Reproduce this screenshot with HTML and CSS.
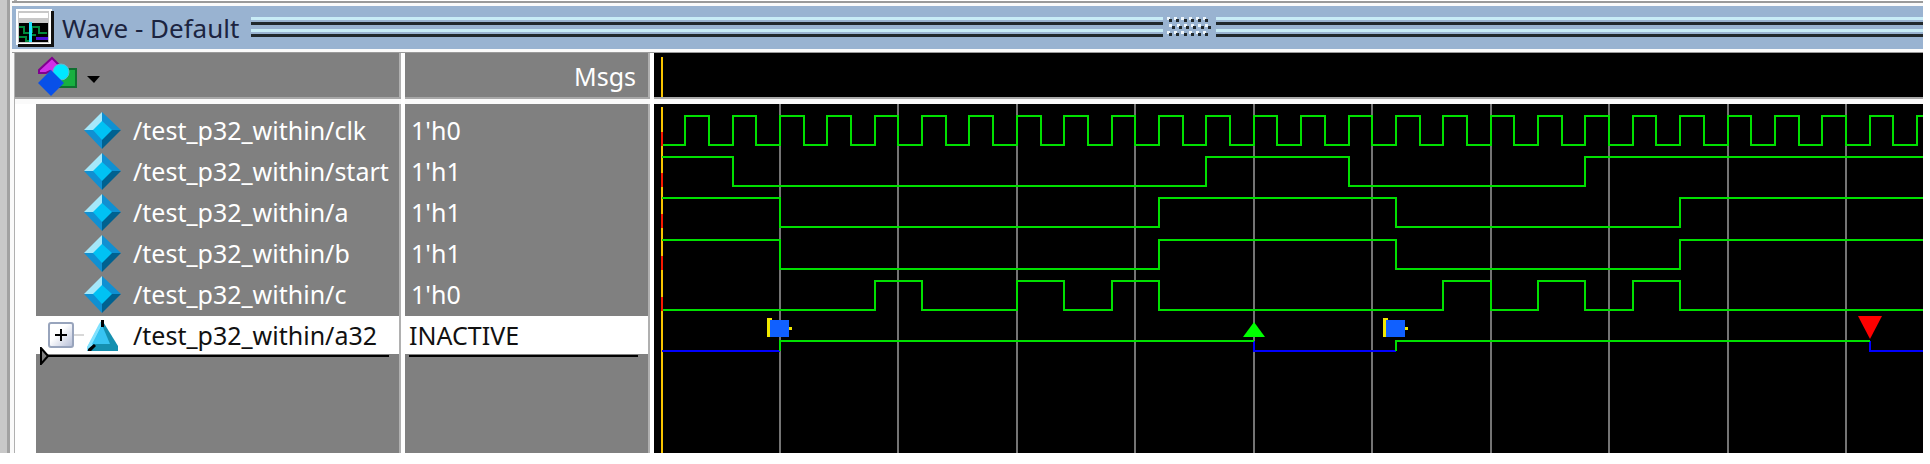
FILE: index.html
```html
<!DOCTYPE html>
<html lang="en">
<head>
<meta charset="utf-8">
<title>Wave - Default</title>
<link rel="stylesheet" href="styles.css">
</head>
<body>
<svg class="defs" width="0" height="0" aria-hidden="true">
  <symbol id="diamond" viewBox="0 0 37 37">
    <path fill="#a5e8fa" d="M18 0V18H0z"/>
    <path fill="#1090d2" d="M18 0L37 18H18zM0 18H18V37z"/>
    <path fill="#006190" d="M37 18H18V37z"/>
    <path fill="#00c2f4" d="M18 9L28 18L18 28L9 18z"/>
  </symbol>
</svg>
<main class="window">
  <header class="titlebar">
    <svg class="app-icon" width="38" height="38" viewBox="0 0 38 38" aria-hidden="true">
      <path fill="#fff" d="M0 0H36V36H0z"/>
      <path fill="#111" d="M35 2H38V38H2V35H35z"/>
      <path fill="#c8c8c8" d="M2 2H33V34H2z"/>
      <path fill="#fff" d="M3 4H32V9H3z"/>
      <path fill="#000" d="M3 14H32V33H3z"/>
      <path fill="none" stroke="#008a3c" stroke-width="2" d="M3 18H8V24H13M16 24V18H23V24H31M3 28H10V32H13M16 26H20"/>
      <path fill="#20e0ff" d="M13 13H16V33H13z"/>
      <path fill="#4a10d8" d="M20 28H32V31H20z"/>
    </svg>
    <h1 class="title">Wave - Default</h1>
    <span class="stripes stripes-left"></span>
    <svg class="grip" width="45" height="21" viewBox="0 0 45 21" aria-hidden="true">
      <g fill="#edf5fb">
        <path d="M0 0h3v3h-3zM7 0h3v3h-3zM14 0h3v3h-3zM22 0h3v3h-3zM29 0h3v3h-3zM36 0h3v3h-3z"/>
        <path d="M2 7h3v3h-3zM10 7h3v3h-3zM17 7h3v3h-3zM24 7h3v3h-3zM31 7h3v3h-3zM38 7h3v3h-3z"/>
        <path d="M0 14h3v3h-3zM7 14h3v3h-3zM14 14h3v3h-3zM22 14h3v3h-3zM29 14h3v3h-3zM36 14h3v3h-3z"/>
      </g>
      <g fill="#20282c">
        <path d="M2 2h3v3h-3zM9 2h3v3h-3zM17 2h3v3h-3zM24 2h3v3h-3zM31 2h3v3h-3zM38 2h3v3h-3z"/>
        <path d="M5 9h3v3h-3zM12 9h3v3h-3zM19 9h3v3h-3zM26 9h3v3h-3zM34 9h3v3h-3zM41 9h3v3h-3z"/>
        <path d="M2 16h3v3h-3zM9 16h3v3h-3zM17 16h3v3h-3zM24 16h3v3h-3zM31 16h3v3h-3zM38 16h3v3h-3z"/>
      </g>
    </svg>
    <span class="stripes stripes-right"></span>
  </header>

  <div class="panes">
    <section class="pane names" aria-label="Signals">
      <div class="pane-head">
        <button class="tool" type="button" aria-label="Signal filter">
          <svg width="62" height="41" viewBox="0 0 62 41" aria-hidden="true">
            <path fill="#18b040" stroke="#107030" stroke-width="2" d="M20 13H38V31H20z"/>
            <path fill="#d030e8" stroke="#800090" stroke-width="2" d="M1 14L14 2L24 12L16 20L12 15L8 17H1z"/>
            <circle fill="#00e8ff" stroke="#60b8d0" stroke-width="1" cx="23" cy="16" r="8"/>
            <path fill="#0850e8" d="M13 14L26 27L13 40L0 27z"/>
            <path fill="#000" d="M49 20H62L56 27z"/>
          </svg>
        </button>
      </div>
      <ul class="pane-body list tree">
        <li class="row"><svg class="icon" width="37" height="37"><use href="#diamond"/></svg><span>/test_p32_within/clk</span></li>
        <li class="row"><svg class="icon" width="37" height="37"><use href="#diamond"/></svg><span>/test_p32_within/start</span></li>
        <li class="row"><svg class="icon" width="37" height="37"><use href="#diamond"/></svg><span>/test_p32_within/a</span></li>
        <li class="row"><svg class="icon" width="37" height="37"><use href="#diamond"/></svg><span>/test_p32_within/b</span></li>
        <li class="row"><svg class="icon" width="37" height="37"><use href="#diamond"/></svg><span>/test_p32_within/c</span></li>
        <li class="row selected">
          <button class="expand" type="button" aria-label="Expand a32">
            <svg width="12" height="12" viewBox="0 0 12 12" aria-hidden="true"><path fill="#000" d="M5 0H7V5H12V7H7V12H5V7H0V5H5z"/></svg>
          </button>
          <span class="branch"></span>
          <svg class="icon" width="37" height="37" viewBox="0 0 37 37" aria-hidden="true">
            <path fill="#1590b0" d="M18 3L34 29V34H3V31z"/>
            <path fill="#80e2ff" d="M18 3V8L8 29L3 34V30L15 7z"/>
            <path fill="#38c4f2" d="M18 8L26 27H8z"/>
            <path fill="#000" d="M17 3H20V10H17zM4 32L10 27L12 29L7 34H4z"/>
          </svg>
          <span>/test_p32_within/a32</span>
        </li>
        <li class="insert-line">
          <svg width="9" height="18" viewBox="0 0 9 18" aria-hidden="true"><path fill="#808080" stroke="#000" stroke-width="2" d="M1 1V17L8 9z"/></svg>
        </li>
      </ul>
    </section>

    <section class="pane values" aria-label="Values">
      <div class="pane-head msgs">Msgs</div>
      <ul class="pane-body list">
        <li class="row">1'h0</li>
        <li class="row">1'h1</li>
        <li class="row">1'h1</li>
        <li class="row">1'h1</li>
        <li class="row">1'h0</li>
        <li class="row selected">INACTIVE</li>
        <li class="insert-line"></li>
      </ul>
    </section>

    <section class="pane waves" aria-label="Waveforms">
      <div class="pane-head">
        <svg class="canvas" aria-hidden="true"><path class="cursor" d="M8 4V44"/></svg>
      </div>
      <div class="pane-body">
        <svg class="canvas" id="chart" role="img" aria-label="Signal waveforms"></svg>
      </div>
    </section>
  </div>
</main>
<script src="app.js"></script>
</body>
</html>
```

FILE: styles.css
```css
* {
  box-sizing: border-box;
}

body {
  margin: 0;
  background: #fff;
  color: #fff;
  font-family: "Noto Sans", "Open Sans", sans-serif;
  font-size: 25px;
  line-height: 36px;
}

.defs {
  position: absolute;
}

.window {
  display: flex;
  flex-direction: column;
  height: 100vh;
  min-height: 400px;
  padding: 1px 7px 11px 15px;
  background:
    linear-gradient(90deg, #c9c9c9 0 7px, #a2a2a2 7px 10px, #fafafa 10px 14px, #b0b0b0 14px 17px, transparent 17px)
    0 0 / 100% calc(100% - 11px) no-repeat;
}

.titlebar {
  display: flex;
  flex: none;
  align-items: center;
  height: 52px;
  margin-left: -3px;
  padding: 0 0 0 4px;
  border-top: 2px solid #9a9a9a;
  border-bottom: 1px solid #9a9a9a;
  background: linear-gradient(#fafafa 0 3px, #99b3d1 3px 46px, #fafafa 46px);
}

.title {
  margin: 0 12px 0 8px;
  color: #1c2440;
  font-size: 26px;
  font-weight: 400;
  line-height: 36px;
  white-space: nowrap;
}

.stripes {
  height: 21px;
  background: linear-gradient(#c8ecf6 0 3px, #99b3d1 3px 5px, #20282c 5px 8px, #99b3d1 8px 12px, #c8ecf6 12px 15px, #99b3d1 15px 17px, #20282c 17px 20px, #99b3d1 20px);
}

.stripes-left {
  flex: 912 1 0;
}

.stripes-right {
  flex: 707 1 0;
}

.grip {
  flex: none;
  margin: 0 4px;
}

.panes {
  display: grid;
  flex: 1;
  grid-template-columns: 390px 249px 1fr;
  min-height: 0;
}

.pane {
  display: flex;
  flex-direction: column;
  min-width: 0;
  background: #808080;
}

.names,
.values {
  border-right: 4px solid #fff;
  box-shadow: inset -2px 0 #b0b0b0;
}

.waves {
  background: #000;
}

.pane-head {
  flex: none;
  height: 51px;
  border-bottom: 5px solid #fafafa;
  box-shadow: inset 0 -2px #a8a8a8;
}

.pane-body {
  flex: 1;
  min-height: 0;
  margin: 0;
}

.names .pane-body {
  border-left: 21px solid #fff;
}

.tool {
  display: block;
  margin: 3px 0 0 23px;
  padding: 0;
  border: 0;
  background: none;
}

.tool svg {
  display: block;
}

.msgs {
  padding: 5px 14px 0 0;
  text-align: right;
}

.list {
  padding: 7px 0 0;
  list-style: none;
}

.row {
  display: flex;
  align-items: center;
  height: 38px;
  margin-bottom: 3px;
  padding-left: 6px;
  white-space: nowrap;
}

.tree .row {
  padding-left: 48px;
}

.row .icon {
  flex: none;
  margin-right: 12px;
}

.row.selected {
  margin-right: 2px;
  margin-bottom: 0;
  background: #fff;
  color: #111;
}

.values .row.selected {
  padding-left: 4px;
}

.tree .row.selected {
  padding-left: 12px;
}

.expand {
  display: flex;
  flex: none;
  align-items: center;
  justify-content: center;
  width: 26px;
  height: 26px;
  padding: 0;
  border: 2px solid #98a4bc;
  border-radius: 3px;
  background: linear-gradient(135deg, #fff 40%, #b8c0d8);
}

.branch {
  flex: none;
  width: 10px;
  height: 2px;
  background: #d8d8d8;
}

.insert-line {
  display: flex;
  align-items: center;
  height: 18px;
  margin: -7px 12px 0 4px;
  background: linear-gradient(#000, #000) 0 8px / 100% 2px no-repeat;
}

.canvas {
  display: block;
  width: 100%;
  height: 100%;
  overflow: hidden;
}

.canvas path {
  fill: none;
  stroke-width: 2;
}

.canvas .cursor {
  stroke: #f8c400;
}

.canvas .grid {
  stroke: #747474;
}

.canvas .high {
  stroke: #00e000;
}

.canvas .unknown {
  stroke: #f81800;
}

.canvas .idle {
  stroke: #0000ff;
}

.canvas .start {
  fill: #1060ff;
}

.canvas .bracket {
  fill: #f0e800;
}

.canvas .pass {
  fill: #00ff00;
}

.canvas .fail {
  fill: #ff0000;
}
```

FILE: app.js
```js
const chart = document.getElementById("chart");
const ORIGIN = 8;
const HALF_PERIOD = 23.69;
const ROW = 41.2;
const END = 200;

const xAt = (n) => Math.floor(ORIGIN + HALF_PERIOD * n);

function draw(cls, d) {
  const path = document.createElementNS("http://www.w3.org/2000/svg", "path");
  path.setAttribute("class", cls);
  path.setAttribute("d", d);
  chart.appendChild(path);
}

// Each signal starts at a level and toggles at the listed half-periods.
const signals = [
  { level: 0, edges: Array.from({ length: END }, (_, i) => i + 1) },
  { level: 1, edges: [3, 23, 29, 39] },
  { level: 1, edges: [5, 21, 31, 43] },
  { level: 1, edges: [5, 21, 31, 43] },
  { level: 0, edges: [9, 11, 15, 17, 19, 21, 33, 35, 37, 39, 41, 43] }
];

for (let n = 5; n < END; n += 5) {
  draw("grid", `M${xAt(n)} 0V2000`);
}

draw("cursor", `M${ORIGIN} 3V2000`);

signals.forEach((signal, row) => {
  const high = Math.round(12 + row * ROW);
  const low = high + 29;
  let level = signal.level;
  let d = `M${ORIGIN} ${level ? high : low}`;
  signal.edges.forEach((n) => {
    level = 1 - level;
    d += `H${xAt(n)}V${level ? high : low}`;
  });
  draw("high", d + `H${xAt(END)}`);
  draw("unknown", `M${ORIGIN} ${low - 13}V${low + 1}`);
});

// Assertion thread: active spans in green, inactive in blue.
const active = 237;
const inactive = 247;
draw("idle", `M${ORIGIN} ${inactive}H${xAt(5)}`);
draw("idle", `M${xAt(25)} ${active}V${inactive}H${xAt(31)}`);
draw("idle", `M${xAt(51)} ${active}V${inactive}H${xAt(END)}`);
draw("high", `M${xAt(5)} ${inactive}V${active}H${xAt(25)}`);
draw("high", `M${xAt(31)} ${inactive}V${active}H${xAt(51)}`);

[5, 31].forEach((n) => {
  const x = xAt(n);
  draw("bracket", `M${x - 13} 214h5v3h-2v16h-3zM${x + 9} 223h3v3h-3z`);
  draw("start", `M${x - 10} 216h19v17h-19z`);
});
draw("pass", `M${xAt(25)} 218l11 15h-22z`);
draw("fail", `M${xAt(51)} 235l-12 -23h24z`);
```
